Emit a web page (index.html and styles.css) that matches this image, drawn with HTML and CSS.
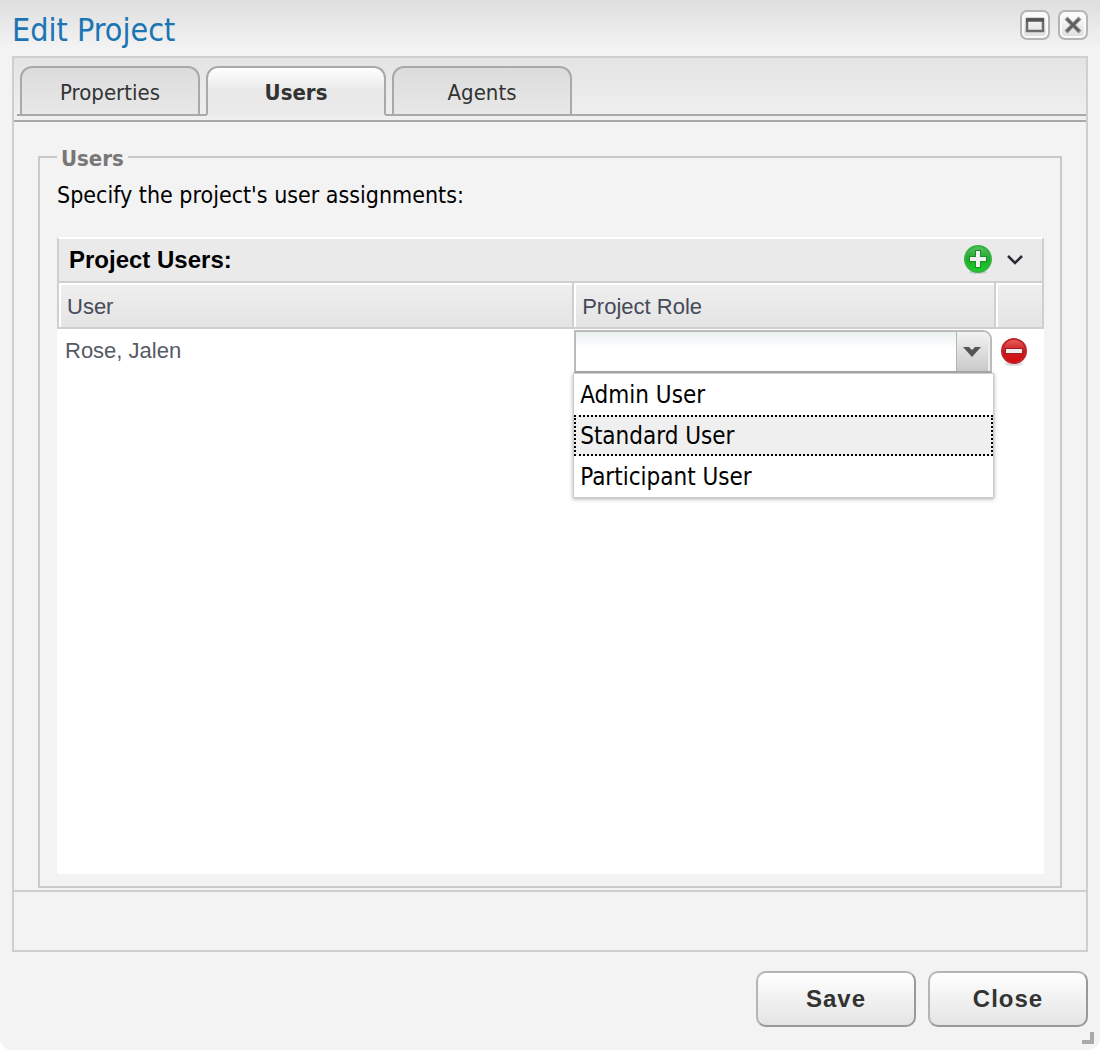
FILE: index.html
```html
<!DOCTYPE html>
<html lang="en">
<head>
<meta charset="utf-8">
<title>Edit Project</title>
<meta name="viewport" content="width=device-width, initial-scale=1">
<link rel="stylesheet" href="styles.css">
</head>
<body>
<main class="dialog" role="dialog" aria-labelledby="dialog-title">
  <header class="dialog-header">
    <h1 class="dialog-title" id="dialog-title">Edit Project</h1>
    <div class="window-tools">
      <button class="tool" type="button" aria-label="Maximize">
        <svg width="20" height="20" viewBox="0 0 20 20"><rect x="2" y="4" width="16" height="12" fill="none" stroke="#6c6c6c" stroke-width="2.500"/><path d="M1 5H19" stroke="#555" stroke-width="3.500"/></svg>
      </button>
      <button class="tool" type="button" aria-label="Close window">
        <svg width="20" height="20" viewBox="0 0 20 20"><path d="M3 3L17 17M17 3L3 17" stroke="#8b8b8b" stroke-width="4"/><path d="M4 4L16 16M16 4L4 16" stroke="#5c5c5c" stroke-width="2"/></svg>
      </button>
    </div>
  </header>

  <section class="panel">
    <div class="tab-bar">
      <div class="tabs" role="tablist">
        <button class="tab" type="button" role="tab" aria-selected="false">Properties</button>
        <button class="tab tab-active" type="button" role="tab" aria-selected="true">Users</button>
        <button class="tab" type="button" role="tab" aria-selected="false">Agents</button>
      </div>
    </div>

    <div class="panel-body">
      <fieldset class="group">
        <legend class="group-title">Users</legend>
        <p class="intro">Specify the project's user assignments:</p>
        <div class="grid">
          <div class="grid-header">
            <h2 class="grid-title" id="grid-title">Project Users:</h2>
            <button class="icon-button" type="button" aria-label="Add user">
              <svg width="30" height="32" viewBox="0 0 30 32">
                <defs>
                  <linearGradient id="green" x1="0" y1="0" x2="0" y2="1"><stop offset="0" stop-color="#5bbd62"/><stop offset=".5" stop-color="#20aa2d"/><stop offset="1" stop-color="#12d323"/></linearGradient>
                </defs>
                <ellipse cx="15" cy="28" rx="9" ry="2" fill="#cfcfcf"/>
                <circle cx="15" cy="15" r="13" fill="url(#green)" stroke="#35b341" stroke-width="2"/>
                <path d="M15 6V24M6 15H24" stroke="#178f22" stroke-width="6"/>
                <path d="M15 7V23M7 15H23" stroke="#f0f0f0" stroke-width="4"/>
              </svg>
            </button>
            <button class="icon-button" type="button" aria-label="Collapse">
              <svg width="30" height="32" viewBox="0 0 30 32"><path d="M8 12L15 19L22 12" fill="none" stroke="#2b2b30" stroke-width="2.500"/></svg>
            </button>
          </div>
          <table class="users" aria-labelledby="grid-title">
            <colgroup><col class="col-user"><col class="col-role"><col class="col-action"></colgroup>
            <thead>
              <tr><th scope="col">User</th><th scope="col">Project Role</th><th scope="col" aria-label="Actions"></th></tr>
            </thead>
            <tbody>
              <tr>
                <td class="name">Rose, Jalen</td>
                <td>
                  <div class="combo">
                    <select class="combo-field" aria-label="Project role for Rose, Jalen">
                      <option value="" selected></option>
                      <option>Admin User</option>
                      <option>Standard User</option>
                      <option>Participant User</option>
                    </select>
                    <span class="combo-trigger" aria-hidden="true">
                      <svg width="20" height="14" viewBox="0 0 20 14"><path d="M1 2H7L10 5L13 2H19L10 12Z" fill="#555"/></svg>
                    </span>
                    <ul class="options" role="listbox" aria-label="Project role">
                      <li class="option" role="option">Admin User</li>
                      <li class="option option-focus" role="option" aria-selected="true">Standard User</li>
                      <li class="option" role="option">Participant User</li>
                    </ul>
                  </div>
                </td>
                <td class="action">
                  <button class="icon-button" type="button" aria-label="Remove Rose, Jalen">
                    <svg width="30" height="32" viewBox="0 0 30 32">
                      <defs>
                        <linearGradient id="red" x1="0" y1="0" x2="0" y2="1"><stop offset="0" stop-color="#ed6262"/><stop offset=".5" stop-color="#c81c20"/><stop offset="1" stop-color="#d90b0e"/></linearGradient>
                      </defs>
                      <ellipse cx="15" cy="28" rx="9" ry="2" fill="#ddd"/>
                      <circle cx="15" cy="15" r="12" fill="url(#red)" stroke="#be252a" stroke-width="2"/>
                      <rect x="6" y="12" width="18" height="6" fill="#9f2024"/>
                      <rect x="7" y="13" width="16" height="4" fill="#eee"/>
                    </svg>
                  </button>
                </td>
              </tr>
            </tbody>
          </table>
        </div>
      </fieldset>
    </div>
    <div class="panel-footer"></div>
  </section>

  <footer class="dialog-actions">
    <button class="push" type="button">Save</button>
    <button class="push" type="button">Close</button>
  </footer>
  <span class="resize-grip" aria-hidden="true"></span>
</main>
</body>
</html>
```
FILE: styles.css
```css
* {
  box-sizing: border-box;
}

body {
  margin: 0;
  background: #fff;
  color: #000;
  font: 22px/28px "DejaVu Sans Condensed", Tahoma, "Noto Sans", sans-serif;
}

button {
  margin: 0;
  padding: 0;
  border: 0;
  background: none;
  font: inherit;
}

svg {
  display: block;
}

.dialog {
  position: relative;
  display: flex;
  flex-direction: column;
  min-height: 100vh;
  padding: 0 12px 23px;
  border-radius: 0 0 12px 12px;
  background: #f3f3f3 linear-gradient(#dedede, #f3f3f3) top / 100% 48px no-repeat;
}

/* Title bar */
.dialog-header {
  display: flex;
  align-items: flex-start;
  justify-content: space-between;
  height: 56px;
  padding-top: 10px;
}

.dialog-title {
  margin: 0;
  color: #1b74b3;
  font-size: 32px;
  font-weight: 400;
  line-height: 40px;
}

.window-tools {
  display: flex;
  gap: 8px;
}

.tool {
  display: grid;
  place-items: center;
  width: 30px;
  height: 30px;
  border: 2px solid #b4b4b4;
  border-radius: 7px;
  background: linear-gradient(#fff, #ddd);
  box-shadow: inset 0 0 0 2px #fafafa;
}

/* Panel and tabs */
.panel {
  display: flex;
  flex: 1;
  flex-direction: column;
  border: 2px solid #cfcfcf;
}

.tab-bar {
  padding: 8px 0 4px 3px;
  border-bottom: 2px solid #a9a9a9;
  background: linear-gradient(#e4e4e4, #f0f0f0);
}

.tabs {
  display: flex;
  gap: 6px;
  height: 50px;
  padding-left: 3px;
  background: linear-gradient(#a9a9a9, #a9a9a9) bottom / 100% 2px no-repeat;
}

.tab {
  width: 180px;
  padding-top: 3px;
  border: 2px solid #a9a9a9;
  border-radius: 12px 12px 0 0;
  background: linear-gradient(#dcdcdc, #e8e8e8);
  color: #333;
}

.tab-active {
  border-bottom-color: #ebebeb;
  background: linear-gradient(#fff, #e8e8e8 50%, #ebebeb);
  font-weight: 700;
}

.panel-body {
  flex: 1;
  padding: 20px 24px 2px;
}

.panel-footer {
  height: 60px;
  border-top: 2px solid #cfcfcf;
}

/* Users group */
.group {
  min-width: 0;
  margin: 0;
  padding: 9px 16px 12px 17px;
  border: 2px solid #c9c9c9;
}

.group-title {
  padding: 4px 4px 0;
  color: #777;
  font-weight: 700;
  line-height: 26px;
}

.intro {
  margin: 0 0 28px;
  font-size: 23px;
}

/* The grid takes the window height left by the rest of the dialog */
.grid {
  min-height: calc(100vh - 413px);
  background: #fff;
  font-family: "Liberation Sans", Arial, sans-serif;
}

.grid-header {
  display: flex;
  align-items: center;
  gap: 7px;
  height: 44px;
  padding: 0 12px 0 10px;
  border: solid #cfcfcf;
  border-width: 0 2px;
  border-top: 2px solid #fff;
  background: #eaeaea;
}

.grid-title {
  flex: 1;
  margin: 0;
  font-size: 24px;
  font-weight: 700;
}

.users {
  width: 100%;
  border-spacing: 0;
  table-layout: fixed;
}

.col-user {
  width: 52.400%;
}

.col-role {
  width: 42.700%;
}

.col-action {
  width: 4.900%;
}

.users th {
  height: 48px;
  padding: 4px 8px 0;
  border: solid #cfcfcf;
  border-width: 2px 2px 2px 0;
  background: linear-gradient(#efefef, #e4e4e4);
  box-shadow: inset 2px 2px #fff;
  color: #464a59;
  font-weight: 400;
  text-align: left;
}

.users th:first-child {
  border-left-width: 2px;
}

.users td {
  height: 45px;
  padding: 0;
  vertical-align: top;
}

.users .name {
  padding: 8px 8px 0;
  color: #555b66;
}

.users .action {
  padding: 7px 3px 0;
}

.icon-button {
  display: block;
}

/* Role drop-down */
.combo {
  position: relative;
  display: flex;
  margin: 1px 4px 0 0;
}

.combo-field {
  width: 100%;
  height: 43px;
  padding: 0 40px 0 6px;
  border: 2px solid #bbb;
  border-bottom-color: #a3a3a3;
  border-radius: 0 9px 0 0;
  background: linear-gradient(#e9eff0, #fff 16px);
  font: inherit;
  appearance: none;
}

.combo-trigger {
  position: absolute;
  top: 2px;
  right: 2px;
  display: grid;
  place-items: center;
  width: 34px;
  height: 39px;
  border-left: 1px solid #b5b5b5;
  border-right: 2px solid #eee;
  border-radius: 0 7px 0 0;
  background: linear-gradient(#f3f3f3, #c9c9c9);
  pointer-events: none;
}

.options {
  position: absolute;
  top: 100%;
  right: -2px;
  left: -1px;
  margin: 0;
  padding: 0;
  border: 1px solid #ccc;
  background: #fff;
  box-shadow: 0 1px 4px #aaa;
  font-family: "DejaVu Sans Condensed", Tahoma, "Noto Sans", sans-serif;
  list-style: none;
}

.option {
  height: 41px;
  padding: 0 4px;
  border: 2px dotted transparent;
  font-size: 24px;
  line-height: 38px;
}

.option-focus {
  border-color: #000;
  background: #efefef;
}

/* Dialog buttons */
.dialog-actions {
  display: flex;
  justify-content: flex-end;
  gap: 12px;
  padding-top: 19px;
}

.push {
  width: 160px;
  height: 56px;
  border: 2px solid;
  border-color: #b5b5b5 #999 #999 #b5b5b5;
  border-radius: 10px;
  background: linear-gradient(#fff, #e4e4e4);
  color: #333;
  font: 700 24px/28px "Liberation Sans", Arial, sans-serif;
  letter-spacing: 1px;
}

.resize-grip {
  position: absolute;
  right: 6px;
  bottom: 6px;
  width: 12px;
  height: 12px;
  border: solid #aaa;
  border-width: 0 4px 4px 0;
}
```
